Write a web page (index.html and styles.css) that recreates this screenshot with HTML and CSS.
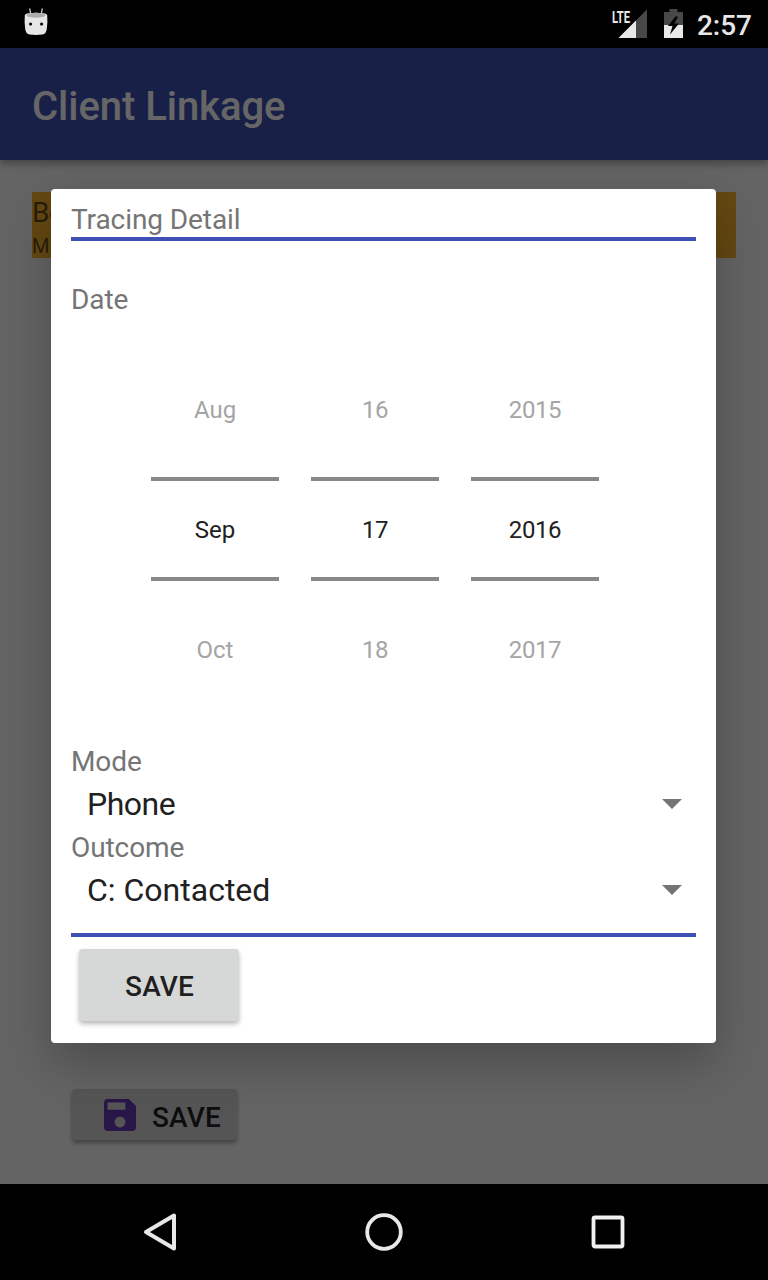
FILE: index.html
```html
<!DOCTYPE html>
<html lang="en">
<head>
<meta charset="utf-8">
<title>Client Linkage</title>
<link rel="stylesheet" href="styles.css">
</head>
<body>
<div class="screen">
  <header class="status-bar">
    <svg class="status-android" width="24" height="28" viewBox="0 0 24 28">
      <path d="M5.800 1l1 5M18.200 1L17.200 6" stroke="#c4c4c4" stroke-width="1.300" stroke-linecap="round"/>
      <path d="M.8 7.500Q1 5.500 4 5.200Q12 4.400 20 5.200Q23 5.500 23.200 7.500Q23.800 14 22.800 21Q22 26 18.500 26.600Q12 27.500 5.500 26.600Q2 26 1.200 21Q.2 14 .8 7.500z" fill="#e6e6e6"/>
      <ellipse cx="12" cy="7.300" rx="9.500" ry="2.500" fill="#ababab"/>
      <circle cx="6.600" cy="16" r="1.600"/><circle cx="17.600" cy="16" r="1.600"/>
    </svg>
    <div class="status-right">
      <svg class="signal" width="36" height="30" viewBox="0 0 36 30">
        <path d="M35 0.500V29H6.500z" fill="#484848"/>
        <path d="M24 11.500V29H6.500z" fill="#e8e8e8"/>
        <text class="lte" x="0" y="13.500" textLength="18" lengthAdjust="spacingAndGlyphs">LTE</text>
      </svg>
      <svg class="battery" width="20" height="30" viewBox="0 0 20 30">
        <path d="M0 3h5.500V0h8v3H19v13H0z" fill="#484848"/>
        <path d="M0 16h19v13H0z" fill="#e8e8e8"/>
        <path d="M11.500 7.500L4 17h4.500L6 25.500 15 14.500h-4.500L14 7.500z"/>
      </svg>
      <span class="clock">2:57</span>
    </div>
  </header>

  <main class="page">
    <div class="toolbar">Client Linkage</div>
    <div class="client-row">
      <div class="client-name">Be</div>
      <div class="client-meta">M</div>
    </div>
    <button class="page-save">
      <svg width="32" height="32" viewBox="3 3 18 18"><path fill="#673ab7" d="M17 3H5c-1.110 0-2 .9-2 2v14c0 1.100.89 2 2 2h14c1.100 0 2-.9 2-2V7l-4-4zm-5 16c-1.660 0-3-1.340-3-3s1.340-3 3-3 3 1.340 3 3-1.340 3-3 3zm3-10H5V5h10v4z"/></svg>
      <span class="page-save-text">SAVE</span>
    </button>
    <div class="scrim">
      <section class="dialog">
        <div class="label heading">Tracing Detail</div>
        <div class="rule"></div>
        <div class="label date-label">Date</div>
        <div class="picker">
          <div class="wheel"><span class="faded">Aug</span><span class="current">Sep</span><span class="faded">Oct</span></div>
          <div class="wheel digits"><span class="faded">16</span><span class="current">17</span><span class="faded">18</span></div>
          <div class="wheel digits"><span class="faded">2015</span><span class="current">2016</span><span class="faded">2017</span></div>
        </div>
        <div class="label">Mode</div>
        <div class="spinner"><span class="phone">Phone</span><i class="caret"></i></div>
        <div class="label">Outcome</div>
        <div class="spinner">C: Contacted<i class="caret"></i></div>
        <div class="rule end"></div>
        <button class="dialog-save">SAVE</button>
      </section>
    </div>
  </main>

  <nav class="nav-bar">
    <svg width="36" height="40" viewBox="0 0 36 40"><path d="M4 20L32 3.500V36.500z" fill="none" stroke="#e8e8e8" stroke-width="4" stroke-linejoin="round"/></svg>
    <svg width="40" height="40" viewBox="0 0 40 40"><circle cx="20" cy="20" r="16.800" fill="none" stroke="#e8e8e8" stroke-width="3.800"/></svg>
    <svg width="36" height="40" viewBox="0 0 36 40"><rect x="3.500" y="5.500" width="29" height="29" rx="1.500" fill="none" stroke="#f0f0f0" stroke-width="3.800"/></svg>
  </nav>
</div>
</body>
</html>
```
FILE: styles.css
```css
* { box-sizing: border-box; }
body { margin: 0; background: #000; font-family: Roboto, "Liberation Sans", sans-serif; }
button { border: 0; padding: 0; font-family: inherit; }
svg { display: block; }

.screen { width: 768px; height: 1280px; display: flex; flex-direction: column; overflow: hidden; }

.status-bar { height: 48px; background: #000; display: flex; justify-content: space-between; padding: 0 16px 0 24px; }
.status-android { margin-top: 8px; }
.status-right { display: flex; padding-top: 9px; }
.signal { overflow: visible; }
.lte { font-family: Roboto, sans-serif; font-size: 17px; font-weight: 700; fill: #e8e8e8; }
.battery { margin-left: 16px; }
.clock { margin-left: 13px; font-size: 28px; font-weight: 500; line-height: 33px; color: #e6e6e6; }

.page { height: 1136px; background: #fafafa; position: relative; overflow: hidden; }
.toolbar {
  height: 112px; padding: 3px 32px 0; line-height: 112px;
  font-size: 40px; font-weight: 500; letter-spacing: -.04px; color: #fff; background: #3f51b5;
  box-shadow: 0 4px 8px rgba(0, 0, 0, .32);
}
.client-row { margin: 32px 32px 0; height: 66px; background: #f9b52f; color: rgba(0, 0, 0, .6); }
.client-name { font-size: 28px; line-height: 42px; letter-spacing: -.6px; }
.client-meta { font-size: 20px; line-height: 24px; }
.page-save {
  display: flex; align-items: center; gap: 16px;
  width: 165px; height: 51px; margin: 831px 0 0 72px; padding-left: 32px;
  border-radius: 4px; background: #d4d4d4; color: rgba(0, 0, 0, .87);
  font-size: 28px; font-weight: 500; letter-spacing: .15px;
  box-shadow: 0 3px 4px rgba(0, 0, 0, .35);
}
.page-save-text { padding-top: 6px; }

.scrim { position: absolute; inset: 0; background: rgba(0, 0, 0, .6); padding: 141px 52px 0 51px; }
.dialog {
  height: 854px; padding: 12px 20px 0; background: #fff; border-radius: 4px;
  box-shadow: 0 20px 50px rgba(0, 0, 0, .25);
}
.label { height: 36px; font-size: 28px; line-height: 38px; letter-spacing: -.08px; color: #757575; }
.rule { height: 4px; background: #3f51b5; }
.date-label { margin-top: 40px; }
.picker { display: flex; gap: 32px; margin: 33px 0 33px 80px; }
.wheel { width: 128px; display: flex; flex-direction: column; text-align: center; font-size: 24px; }
.wheel.digits { letter-spacing: -.4px; }
.wheel .faded { line-height: 120px; color: #a5a5a5; }
.wheel .current {
  margin: 7px 0 9px; height: 104px; line-height: 98px; color: #212121;
  border-top: 4px solid #888; border-bottom: 4px solid #888;
}
.spinner {
  height: 50px; line-height: 50px; padding: 0 14px 0 16px;
  display: flex; justify-content: space-between; align-items: center;
  font-size: 32px; color: #212121;
}
.phone { letter-spacing: -.5px; }
.caret { border: 10px solid transparent; border-top-color: #757575; border-bottom: 0; }
.rule.end { margin: 18px 0 12px; }
.dialog-save {
  display: block; margin-left: 8px; width: 160px; height: 72px; padding: 1px 0 0 1px;
  border-radius: 4px; background: #d6d8d7; color: #1f1f1f;
  font-size: 28px; font-weight: 500; line-height: 73px; letter-spacing: .15px;
  box-shadow: 0 3px 5px rgba(0, 0, 0, .28);
}

.nav-bar { height: 96px; background: #000; display: flex; align-items: center; justify-content: space-between; padding: 0 142px; }
```
